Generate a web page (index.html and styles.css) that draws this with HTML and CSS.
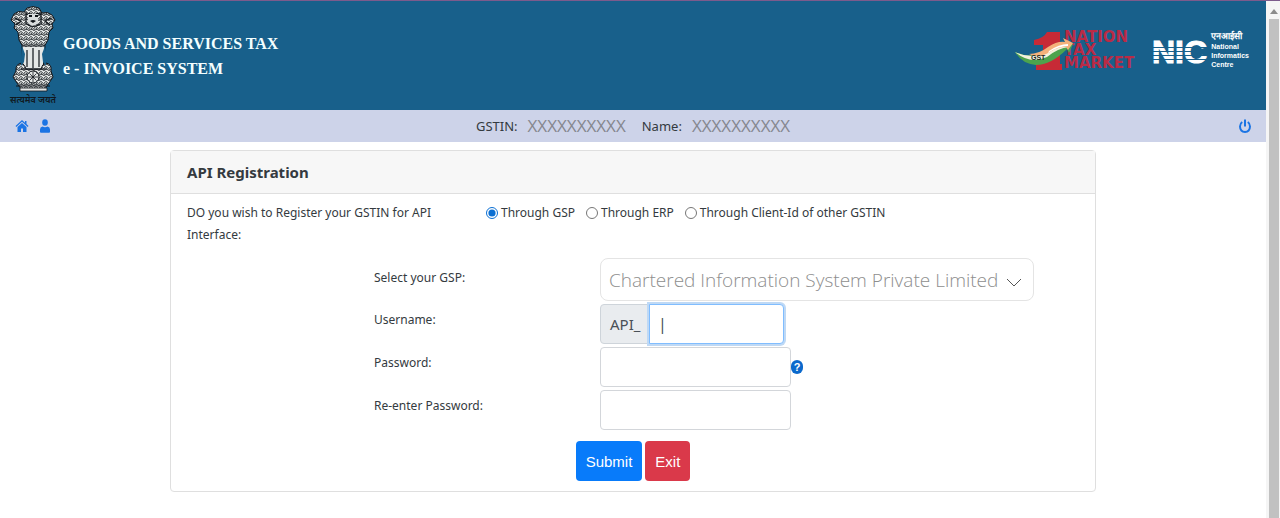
FILE: index.html
```html
<!DOCTYPE html>
<html lang="en">
<head>
<meta charset="utf-8">
<title>e-Invoice System - API Registration</title>
<link rel="stylesheet" href="styles.css">
</head>
<body>
<div class="viewport">
  <div class="page">
    <header class="banner">
      <div class="brand">
        <div class="emblem">
          <svg width="46" height="86" viewBox="0 0 46 86" aria-hidden="true">
            <defs>
              <pattern id="fur" width="5" height="5" patternUnits="userSpaceOnUse">
                <path d="M0 1q1.500-1.500 2.500 1t2.500-1M0 4q1.500-2 3 0t2-1M1 2l1 2" fill="none" stroke="#10151a" stroke-width=".8"/>
              </pattern>
            </defs>
            <g fill="#e4e7e6" stroke="#10151a" stroke-width="1">
              <path d="M17 2q6-3 12 0l3 5q6-2 10 2l3 5-3 4 1 4-4 4-1 8-4 7H13l-4-7-1-8-4-4 1-4-4-4 3-6q4-4 10-2z"/>
              <path d="M12 40h23l-2 24H13z"/>
              <path d="M6 65q-1-7 6-8 3 2 4 6h15q1-5 5-6 6 1 5 8l2 6-4 6-4 6H11l-4-6-4-6z"/>
            </g>
            <path d="M17 2q6-3 12 0l3 5q6-2 10 2l3 5-3 4 1 4-4 4-1 8-4 7H13l-4-7-1-8-4-4 1-4-4-4 3-6q4-4 10-2zM6 65q-1-7 6-8 3 2 4 6h15q1-5 5-6 6 1 5 8l2 6-4 6-4 6H11l-4-6-4-6z" fill="url(#fur)"/>
            <g fill="none" stroke="#10151a" stroke-width="1.200">
              <path d="M16 9q3-3 6 0M25 9q3-3 6 0M20 15q3 3 7 0M17 18q6 5 13 0M16 6v12M31 6v12M5 12l6 3-5 4M41 12l-6 3 5 4"/>
              <path d="M17 44v17M23 42v20M29 44v17M11 63h25M6 80h34"/>
            </g>
            <path d="M12 40l3 8-1 8-3 4zM35 40l-3 8 1 8 3 4z" fill="#18608b"/>
            <path d="M18 8h10v9q-5 5-10 0z" fill="#d9dddd"/>
            <path d="M19 9h3v2h-3zM25 9h3v2h-3zM20 15q3-2 6 0l-3 2z" fill="#10151a"/>
            <circle cx="23" cy="71" r="6" fill="#e4e7e6" stroke="#10151a"/>
            <path d="M23 66v10M18 71h10M19.500 67.500l7 7M26.500 67.500l-7 7" stroke="#10151a" stroke-width=".8"/>
            <path d="M10 82h27v3H10z" fill="#e4e7e6" stroke="#10151a" stroke-width=".8"/>
          </svg>
          <span class="motto" lang="hi">सत्यमेव जयते</span>
        </div>
        <h1 class="title">GOODS AND SERVICES TAX<br>e - INVOICE SYSTEM</h1>
      </div>
      <div class="logos">
        <svg width="126" height="42" viewBox="0 0 126 42" role="img" aria-label="GST, one nation tax market">
          <path d="M20 10q10-2 13-8h13v32h2v6H22v-6h7V15h-9z" fill="#c72a36"/>
          <g class="market">
            <text x="50" y="12">NATION</text>
            <text x="50" y="25">TAX</text>
            <text x="50" y="38">MARKET</text>
          </g>
          <path d="M1 22q17 7 31-1 10-7 20-8l-2-4 9 5-4 9-2-4Q37 35 22 35 8 34 1 22z" fill="#4da34d"/>
          <path d="M1 22q17 8 33-1 10-6 20-7l1 3q-11 1-22 10-17 8-32-5z" fill="#f4f1df"/>
          <path d="M15 24q10 0 19-7 9-6 17-5l-2-4 10 5-5 7-2-3q-9 0-16 5-12 7-21 2z" fill="#f4b17b"/>
          <path d="M35 21q10-7 19-7v2q-10 0-20 7z" fill="#fff"/>
          <text class="gst" x="17" y="30">GST</text>
        </svg>
        <div class="nic">
          <svg width="58" height="40" viewBox="0 0 58 40" role="img" aria-label="NIC">
            <text class="nic-letters" x="0" y="33">NIC</text>
            <path class="nic-lines" d="M0 17.500h58M0 21.500h58M0 25.500h58M0 29.500h58"/>
          </svg>
          <p class="nic-name"><span class="nic-hindi" lang="hi">एनआईसी</span>National<br>Informatics<br>Centre</p>
        </div>
      </div>
    </header>

    <nav class="toolbar" aria-label="Account">
      <div class="tools">
        <a class="tool" href="#" aria-label="Home"><svg width="14" height="14" viewBox="0 0 14 14"><path d="M7 1L.5 7l.8.9L7 2.700l5.700 5.200.8-.9L11.500 5V2H10v1.700zM7 4L2.500 8v5H6V9.500h2V13h3.500V8z"/></svg></a>
        <a class="tool" href="#" aria-label="Profile"><svg width="12" height="14" viewBox="0 0 12 14"><ellipse cx="6" cy="3.500" rx="2.800" ry="3.300"/><path d="M1 13V10.500Q1 8 3.500 7.500q2.500 1.500 5 0Q11 8 11 10.500V13q0 .8-1 .8H2q-1 0-1-.8z"/></svg></a>
      </div>
      <p class="identity"><span>GSTIN:</span><span class="masked">XXXXXXXXXX</span><span class="name">Name:</span><span class="masked">XXXXXXXXXX</span></p>
      <div class="tools tools-end">
        <a class="tool" href="#" aria-label="Log out"><svg width="12" height="14" viewBox="0 0 12 14"><path class="stroke" d="M3.200 3Q1 4.500 1 7.500 1.200 12.800 6 13q4.800-.2 5-5.500Q11 4.500 8.800 3M6 .5v7"/></svg></a>
      </div>
    </nav>

    <main class="card">
      <h2 class="card-title">API Registration</h2>
      <form class="form">
        <fieldset class="mode">
          <legend class="mode-label">DO you wish to Register your GSTIN for API Interface:</legend>
          <div class="options">
            <label class="option"><input type="radio" name="mode" checked>Through GSP</label>
            <label class="option"><input type="radio" name="mode">Through ERP</label>
            <label class="option"><input type="radio" name="mode">Through Client-Id of other GSTIN</label>
          </div>
        </fieldset>
        <div class="fields">
          <label class="gsp-label" for="gsp">Select your GSP:</label>
          <div class="select-wrap">
            <select id="gsp" class="gsp"><option>Chartered Information System Private Limited</option></select>
            <svg class="chevron" width="16" height="9" viewBox="0 0 16 9" aria-hidden="true"><path d="M1 1l7 7 7-7"/></svg>
          </div>
          <label for="user">Username:</label>
          <div class="group"><span class="prefix">API_</span><input id="user" class="box user" type="text" value="|"></div>
          <label for="pass">Password:</label>
          <div class="group"><input id="pass" class="box" type="password"><button class="help" type="button" aria-label="Password help">?</button></div>
          <label for="again">Re-enter Password:</label>
          <div class="group"><input id="again" class="box" type="password"></div>
        </div>
        <div class="actions">
          <button class="btn submit" type="button">Submit</button>
          <button class="btn exit" type="button">Exit</button>
        </div>
      </form>
    </main>
  </div>
  <div class="scrollbar" aria-hidden="true"><span class="arrow"></span><span class="thumb"></span></div>
</div>
</body>
</html>
```
FILE: styles.css
```css
* { box-sizing: border-box; }
body {
  margin: 0;
  background: #fff;
  color: #343a40;
  font: 12px/22px "Noto Sans", sans-serif;
}
h1, h2, p { margin: 0; }
.viewport { display: flex; min-height: 100vh; border-top: 1px solid #7d5b8c; }
.page { flex: 1; min-width: 0; }

.banner {
  display: flex;
  justify-content: space-between;
  background: #18608b;
  padding: 5px 17px 3px 10px;
}
.brand { display: flex; gap: 7px; }
.emblem { display: flex; flex-direction: column; align-items: center; width: 46px; }
.motto { color: #101820; font-size: 9px; font-weight: 600; line-height: 15px; white-space: nowrap; }
.title {
  padding-top: 25px;
  color: #f4ffff;
  font: bold 16px/25px "Liberation Serif", serif;
}
.logos { display: flex; align-items: flex-start; gap: 12px; padding-top: 24px; }
.market { fill: #b92b46; font: bold 15px "DejaVu Sans", sans-serif; }
.gst { fill: #202820; font: bold 7px "Liberation Sans", sans-serif; }
.nic { display: flex; gap: 1px; color: #fff; }
.nic-letters { fill: #fff; stroke: #fff; font: bold 32px "Liberation Sans", sans-serif; }
.nic-lines { stroke: #18608b; stroke-width: 1; }
.nic-name { font: bold 7px/9px "Liberation Sans", sans-serif; }
.nic-hindi { display: block; font-size: 9px; line-height: 12px; }

.toolbar {
  display: flex;
  align-items: center;
  height: 32px;
  padding: 0 15px;
  background: #cdd3e9;
}
.tools { display: flex; flex: 1; gap: 10px; }
.tools-end { justify-content: flex-end; }
.tool { display: flex; }
.tool svg { fill: #1b74e4; }
.tool .stroke { fill: none; stroke: #1b74e4; stroke-width: 2; }
.identity { display: flex; gap: 10px; font-size: 13px; }
.name { margin-left: 6px; }
.masked { color: #85878f; font: 17px/22px "Open Sans", sans-serif; }

.card {
  max-width: 926px;
  margin: 8px auto 0;
  border: 1px solid #dfdfdf;
  border-radius: 4px;
}
.card-title {
  padding: 10px 16px;
  border-bottom: 1px solid #dfdfdf;
  background: #f7f7f7;
  font-size: 15px;
  line-height: 22px;
}
.form { padding: 8px 16px 10px; }
.mode { display: flex; min-width: 0; margin: 0; padding: 0; border: 0; }
.mode-label { float: left; width: 260px; margin-right: 39px; padding: 0; }
.options { display: flex; gap: 11px; }
.option { display: flex; align-items: center; gap: 3px; height: 22px; white-space: nowrap; }
.option input { width: 12px; height: 12px; margin: 0; accent-color: #0b6fd3; }
.fields {
  display: grid;
  grid-template-columns: 226px 1fr;
  row-gap: 3px;
  padding: 12px 0 0 187px;
}
.fields label { padding-top: 5px; }
.fields .gsp-label { padding-top: 9px; }
.select-wrap { position: relative; width: 434px; max-width: 100%; }
.gsp {
  display: block;
  appearance: none;
  width: 100%;
  height: 43px;
  padding: 0 8px;
  border: 1px solid #e4e4e4;
  border-radius: 8px;
  background: #fff;
  color: #8e8e8e;
  font: 300 19px "Open Sans", sans-serif;
}
.chevron { position: absolute; right: 12px; top: 20px; fill: none; stroke: #555; pointer-events: none; }
.group { display: flex; align-items: center; }
.box {
  width: 191px;
  height: 40px;
  padding: 0 8px;
  border: 1px solid #d3d6da;
  border-radius: 4px;
  background: #fff;
  color: #495057;
  font: 16px "Noto Sans", sans-serif;
}
.prefix {
  width: 49px;
  height: 40px;
  padding-left: 9px;
  border: 1px solid #ced4da;
  border-radius: 4px 0 0 4px;
  background: #e9ecef;
  color: #495057;
  font-size: 15px;
  line-height: 38px;
}
.user {
  width: 135px;
  border-color: #80bdff;
  border-radius: 0 4px 4px 0;
  box-shadow: 0 0 0 2px #bfd9f5;
}
.help {
  width: 12px;
  height: 14px;
  padding: 0;
  border: 0;
  border-radius: 6px;
  background: #0b69cc;
  color: #fff;
  font: bold 11px/14px "Liberation Sans", sans-serif;
}
.actions { display: flex; justify-content: center; gap: 3px; padding-top: 11px; }
.btn {
  height: 40px;
  padding: 0 10px;
  border: 0;
  border-radius: 4px;
  color: #fff;
  font: 15px "Liberation Sans", sans-serif;
}
.submit { background: #087bfa; }
.exit { background: #da394a; }

.scrollbar {
  display: flex;
  flex-direction: column;
  align-items: center;
  width: 14px;
  padding: 8px 0 0 2px;
  background: #f5f5f5;
}
.arrow { border: 4px solid transparent; border-top: 0; border-bottom: 5px solid #8b8b8b; }
.thumb { flex: 1; width: 10px; margin-top: 5px; background: #c1c1c1; }
```
